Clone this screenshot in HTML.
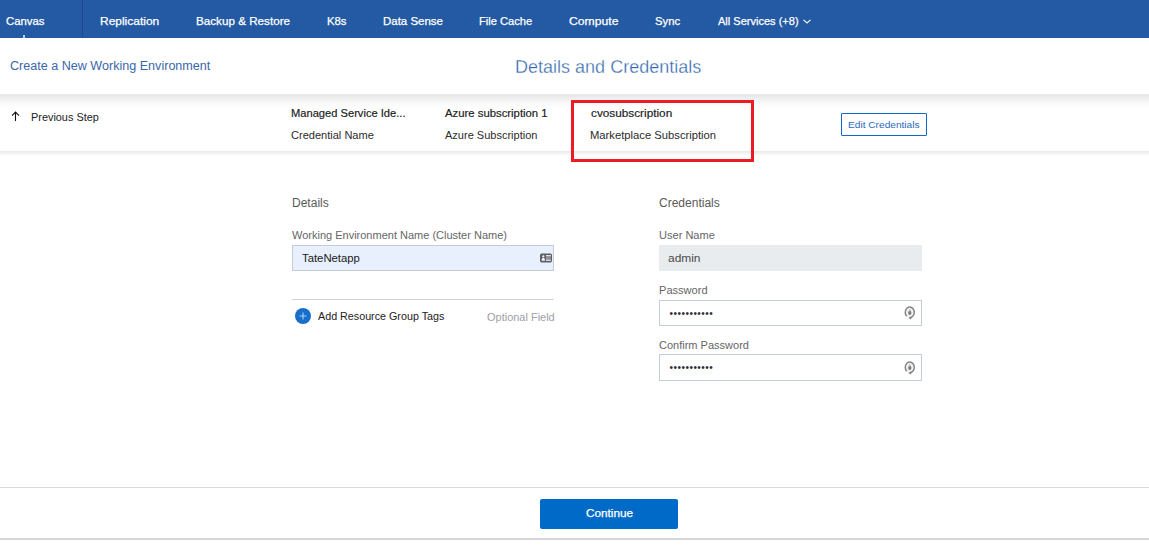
<!DOCTYPE html>
<html><head><meta charset="utf-8"><title>Details and Credentials</title>
<style>
*{box-sizing:border-box;margin:0;padding:0}
html,body{width:1149px;height:548px;overflow:hidden;background:#fff}
body{font-family:"Liberation Sans",sans-serif;position:relative;color:#333}
.abs{position:absolute;white-space:nowrap;line-height:1;display:inline-block;transform-origin:0 0}
#nav{position:absolute;left:0;top:0;width:1149px;height:38px;background:#245aa3}
#navsep{position:absolute;left:82px;top:0;width:1px;height:38px;background:#1d4a8f}
#tick{position:absolute;left:23px;top:35px;width:2px;height:3px;background:#a0d8fb}
#strip{position:absolute;left:0;top:94px;width:1149px;height:15px;background:linear-gradient(#ececec 0,#e8e8e8 1.5px,#f3f3f3 6px,#fbfbfb 10px,#fff 15px)}
#strip2{position:absolute;left:0;top:151px;width:1149px;height:5px;background:linear-gradient(#ebebeb 0,#ececec 1px,#f8f8f8 3px,#fff 5px)}
.inp{position:absolute;height:26px;border:1px solid #c5ccd6;background:#fff}
</style></head><body>
<div id="nav"></div>
<div id="navsep"></div><div id="tick"></div>
<svg style="position:absolute;left:803px;top:18px" width="8" height="6" viewBox="0 0 8 6"><path d="M0.5 1.8 L4 5 L7.5 1.8" fill="none" stroke="#fff" stroke-width="1.15"/></svg>
<div id="strip"></div><div id="strip2"></div>
<svg style="position:absolute;left:11px;top:111px" width="9" height="10" viewBox="0 0 9 10"><path d="M4.5 10V1.4M1 4.6L4.5 1.1L8 4.6" fill="none" stroke="#111" stroke-width="1.1"/></svg>
<div id="redbox" style="position:absolute;left:571px;top:100px;width:183px;height:62px;border:3px solid #ec1c24"></div>
<div id="editbtn" style="position:absolute;left:841px;top:113px;width:86px;height:23px;border:1px solid #1268c8;border-radius:1px;background:#fff"></div>

<div class="inp" id="i1" style="left:292px;top:245px;width:262px;background:#e8f0fe"></div>
<svg style="position:absolute;left:540px;top:253px" width="12" height="10" viewBox="0 0 12 10"><rect x="0" y=".4" width="12" height="9" rx="1.6" fill="#5d6065"/><circle cx="3.3" cy="3.4" r="1.1" fill="#f4f6fb"/><path d="M1.8 7.8V6.3Q1.8 5 3.3 5Q4.8 5 4.8 6.3V7.8z" fill="#f4f6fb"/><rect x="5.9" y="2" width="4.9" height="6" fill="#8e9196"/><rect x="5.9" y="2.1" width="4.9" height="1" fill="#e4e8f0"/><rect x="5.9" y="6.8" width="4.9" height="1" fill="#e4e8f0"/></svg>
<div id="hr1" style="position:absolute;left:292px;top:299px;width:262px;height:1px;background:#d2d3d5"></div>
<svg style="position:absolute;left:294px;top:308px" width="18" height="16" viewBox="0 0 18 16"><circle cx="9" cy="8" r="8" fill="#186fca"/><path d="M9 4.6v6.8M5.6 8h6.8" stroke="#a8d0f8" stroke-width="1.1"/></svg>

<div class="inp" id="i2" style="left:659px;top:245px;width:263px;background:#e9ecef;border-color:#e9ecef"></div>
<div class="inp" id="i3" style="left:659px;top:300px;width:263px"></div>
<div class="inp" id="i4" style="left:659px;top:354px;width:263px;height:27px"></div>
<span class="abs" id="t3" style="left:669.5px;top:309px;font-size:10px;color:#2e2e38;letter-spacing:0.48px">•••••••••••</span>
<span class="abs" id="t4" style="left:669.5px;top:363px;font-size:10px;color:#2e2e38;letter-spacing:0.48px">•••••••••••</span>
<svg style="position:absolute;left:904px;top:306px" width="12" height="14" viewBox="0 0 12 14"><ellipse cx="5.8" cy="6.3" rx="4.4" ry="5.2" fill="#f1f1f1"/><path d="M2.7 10.2A4.5 5.3 0 1 1 6.8 11.5" fill="none" stroke="#858585" stroke-width="1.5"/><ellipse cx="5.8" cy="6.9" rx="1.6" ry="2.1" fill="#7a7a7a"/><path d="M5.8 3.6v2" stroke="#aaa" stroke-width="1.2"/><path d="M7.2 10.4L4.3 12l2.9 1.4z" fill="#777"/></svg>
<svg style="position:absolute;left:904px;top:361px" width="12" height="14" viewBox="0 0 12 14"><ellipse cx="5.8" cy="6.3" rx="4.4" ry="5.2" fill="#f1f1f1"/><path d="M2.7 10.2A4.5 5.3 0 1 1 6.8 11.5" fill="none" stroke="#858585" stroke-width="1.5"/><ellipse cx="5.8" cy="6.9" rx="1.6" ry="2.1" fill="#7a7a7a"/><path d="M5.8 3.6v2" stroke="#aaa" stroke-width="1.2"/><path d="M7.2 10.4L4.3 12l2.9 1.4z" fill="#777"/></svg>

<div id="fl1" style="position:absolute;left:0;top:487px;width:1149px;height:1px;background:#d9d9d9"></div>
<div id="cont" style="position:absolute;left:540px;top:499px;width:138px;height:30px;background:#006ac8;border-radius:2px"></div>
<div id="fl2" style="position:absolute;left:0;top:538px;width:1149px;height:2px;background:#d6d6d6"></div>
<span class="abs" id="n1" style="left:5.51px;top:16.00px;font-size:11.5px;font-weight:normal;-webkit-text-stroke:0.25px #fff;color:#fff;transform:scaleX(0.9868)">Canvas</span>
<span class="abs" id="n2" style="left:100.36px;top:16.00px;font-size:11.5px;font-weight:normal;-webkit-text-stroke:0.25px #fff;color:#fff;transform:scaleX(1.0407)">Replication</span>
<span class="abs" id="n3" style="left:195.99px;top:16.00px;font-size:11.5px;font-weight:normal;-webkit-text-stroke:0.25px #fff;color:#fff;transform:scaleX(1.0148)">Backup &amp; Restore</span>
<span class="abs" id="n4" style="left:326.52px;top:16.00px;font-size:11.5px;font-weight:normal;-webkit-text-stroke:0.25px #fff;color:#fff;transform:scaleX(0.9838)">K8s</span>
<span class="abs" id="n5" style="left:382.60px;top:16.00px;font-size:11.5px;font-weight:normal;-webkit-text-stroke:0.25px #fff;color:#fff;transform:scaleX(0.9966)">Data Sense</span>
<span class="abs" id="n6" style="left:479.03px;top:16.00px;font-size:11.5px;font-weight:normal;-webkit-text-stroke:0.25px #fff;color:#fff;transform:scaleX(0.9682)">File Cache</span>
<span class="abs" id="n7" style="left:569.07px;top:16.00px;font-size:11.5px;font-weight:normal;-webkit-text-stroke:0.25px #fff;color:#fff;transform:scaleX(1.0601)">Compute</span>
<span class="abs" id="n8" style="left:655.11px;top:16.00px;font-size:11.5px;font-weight:normal;-webkit-text-stroke:0.25px #fff;color:#fff;transform:scaleX(0.9818)">Sync</span>
<span class="abs" id="n9" style="left:717.50px;top:16.00px;font-size:11.5px;font-weight:normal;-webkit-text-stroke:0.25px #fff;color:#fff;transform:scaleX(0.9586)">All Services (+8)</span>
<span class="abs" id="crumb" style="left:9.85px;top:60.00px;font-size:12.5px;font-weight:normal;color:#3a67aa;transform:scaleX(1.0058)">Create a New Working Environment</span>
<span class="abs" id="title" style="left:515.46px;top:59.00px;font-size:17.5px;font-weight:normal;-webkit-text-stroke:0.3px #fff;color:#3366ae;transform:scaleX(1.0294)">Details and Credentials</span>
<span class="abs" id="prev" style="left:30.91px;top:112.00px;font-size:11px;font-weight:normal;color:#222;transform:scaleX(0.9896)">Previous Step</span>
<span class="abs" id="k1" style="left:290.59px;top:108.00px;font-size:11px;font-weight:normal;-webkit-text-stroke:0.18px #1c1c22;color:#1c1c22;transform:scaleX(1.0121)">Managed Service Ide...</span>
<span class="abs" id="v1" style="left:291.10px;top:130.00px;font-size:11px;font-weight:normal;color:#2b2b2b;transform:scaleX(1.0037)">Credential Name</span>
<span class="abs" id="k2" style="left:445.30px;top:108.00px;font-size:11px;font-weight:normal;-webkit-text-stroke:0.18px #1c1c22;color:#1c1c22;transform:scaleX(1.0297)">Azure subscription 1</span>
<span class="abs" id="v2" style="left:445.30px;top:130.00px;font-size:11px;font-weight:normal;color:#2b2b2b;transform:scaleX(1.0011)">Azure Subscription</span>
<span class="abs" id="k3" style="left:590.66px;top:108.00px;font-size:11px;font-weight:normal;-webkit-text-stroke:0.18px #1c1c22;color:#1c1c22;transform:scaleX(1.0711)">cvosubscription</span>
<span class="abs" id="v3" style="left:590.18px;top:130.00px;font-size:11px;font-weight:normal;color:#2b2b2b;transform:scaleX(1.0209)">Marketplace Subscription</span>
<span class="abs" id="edittxt" style="left:848.11px;top:120.00px;font-size:9.7px;font-weight:normal;color:#2a6ac0;transform:scaleX(1.0468)">Edit Credentials</span>
<span class="abs" id="h1" style="left:291.90px;top:197.00px;font-size:12px;font-weight:normal;color:#5a5a5a;transform:scaleX(1.0014)">Details</span>
<span class="abs" id="l1" style="left:292.16px;top:230.00px;font-size:11.5px;font-weight:normal;color:#666;transform:scaleX(0.9564)">Working Environment Name (Cluster Name)</span>
<span class="abs" id="t1" style="left:301.95px;top:253.00px;font-size:11.5px;font-weight:normal;color:#1a1a1a;transform:scaleX(0.9845)">TateNetapp</span>
<span class="abs" id="addtxt" style="left:318.40px;top:311.00px;font-size:11px;font-weight:normal;color:#222;transform:scaleX(0.9760)">Add Resource Group Tags</span>
<span class="abs" id="opt" style="left:486.50px;top:312.00px;font-size:11px;font-weight:normal;color:#a0a0a6;transform:scaleX(0.9978)">Optional Field</span>
<span class="abs" id="h2" style="left:659.10px;top:197.00px;font-size:12px;font-weight:normal;color:#5a5a5a;transform:scaleX(1.0008)">Credentials</span>
<span class="abs" id="l2" style="left:658.64px;top:230.00px;font-size:11.5px;font-weight:normal;color:#666;transform:scaleX(0.9604)">User Name</span>
<span class="abs" id="t2" style="left:667.88px;top:253.00px;font-size:11.5px;font-weight:normal;color:#4a4a4a;transform:scaleX(1.0367)">admin</span>
<span class="abs" id="l3" style="left:658.64px;top:285.00px;font-size:11.5px;font-weight:normal;color:#666;transform:scaleX(0.9621)">Password</span>
<span class="abs" id="l4" style="left:659.12px;top:340.00px;font-size:11.5px;font-weight:normal;color:#666;transform:scaleX(0.9574)">Confirm Password</span>
<span class="abs" id="conttxt" style="left:585.89px;top:508.00px;font-size:11.5px;font-weight:normal;-webkit-text-stroke:0.25px #fff;color:#fff;transform:scaleX(1.0222)">Continue</span>
</body></html>
